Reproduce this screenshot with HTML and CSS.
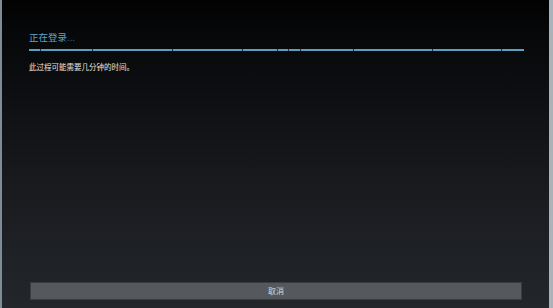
FILE: index.html
```html
<!DOCTYPE html>
<html lang="zh-CN">
<head>
    <meta charset="UTF-8">
    <meta name="viewport" content="width=device-width, initial-scale=1.0">
    <title>正在登录</title>
    <link rel="stylesheet" href="styles.css">
</head>
<body>
    <div class="dialog">
        <div class="content">
            <h1 class="title">正在登录<span class="dots">...</span></h1>
            <div class="progress">
                <span></span><span></span><span></span><span></span>
                <span></span><span></span><span></span><span></span>
                <span></span><span></span><span></span>
            </div>
            <p class="message">此过程可能需要几分钟的时间。</p>
        </div>
        <div class="actions">
            <button class="cancel">取消</button>
        </div>
    </div>
</body>
</html>
```
FILE: styles.css
```css
*{
    padding: 0;
    margin: 0;
    box-sizing: border-box;
}
body{
    width: 553px;
    height: 308px;
    overflow: hidden;
    background: #000;
    font-family: "Noto Sans CJK SC", "Noto Sans", sans-serif;
}
.dialog{
    display: flex;
    flex-direction: column;
    justify-content: space-between;
    height: 308px;
    border-left: 2px solid #7f8c96;
    border-right: 4px solid #aab3ba;
    background: linear-gradient(#020203 0px, #060708 30px, #0d0e11 90px, #1a1c20 200px, #23262b 308px);
}
.content{
    padding: 31px 25px 0 27px;
}
.title{
    font-size: 9.5px;
    font-weight: normal;
    line-height: 13px;
    color: #5fa6c9;
}
.title .dots{
    color: #3f6f88;
}
.progress{
    display: flex;
    gap: 1px;
    height: 2px;
    margin-top: 5px;
    background: #1c3340;
}
.progress span{
    height: 2px;
    background: #5b9fc1;
}
.progress span:nth-child(1){ width: 11px; }
.progress span:nth-child(2){ width: 51px; }
.progress span:nth-child(3){ width: 79px; }
.progress span:nth-child(4){ width: 69px; }
.progress span:nth-child(5){ width: 34px; }
.progress span:nth-child(6){ width: 10px; }
.progress span:nth-child(7){ width: 11px; }
.progress span:nth-child(8){ width: 52px; }
.progress span:nth-child(9){ width: 78px; }
.progress span:nth-child(10){ width: 68px; }
.progress span:nth-child(11){ flex: 1; }
.message{
    margin-top: 11px;
    font-size: 7.5px;
    line-height: 10px;
    color: #e6e6e6;
}
.actions{
    padding: 0 27px 8px 28px;
}
.cancel{
    display: block;
    width: 100%;
    height: 18px;
    border: 1px solid #3a3d40;
    background: #55595b;
    color: #d8d8d8;
    font-family: "Noto Sans CJK SC", "Noto Sans", sans-serif;
    font-size: 8px;
    line-height: 16px;
    text-align: center;
}
```
